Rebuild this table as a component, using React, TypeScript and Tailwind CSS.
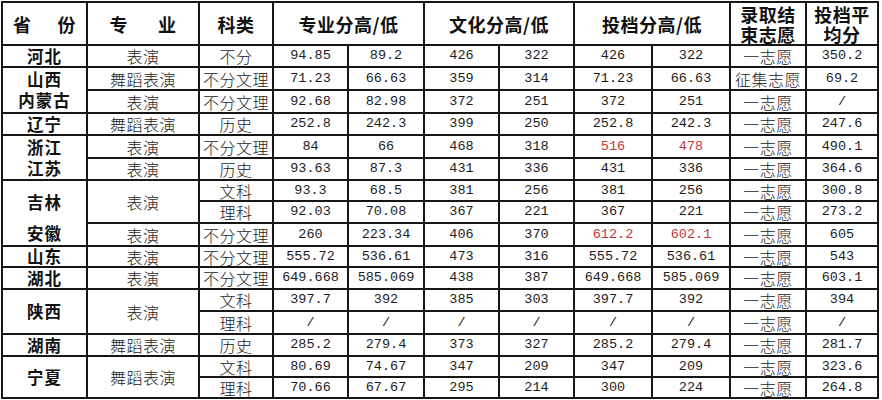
import React from 'react';

const CJK = { fontFamily: '"Noto Sans CJK SC", "Noto Sans", sans-serif' };

function H({ children, colSpan }: { children: React.ReactNode; colSpan?: number }) {
  return (
    <th
      colSpan={colSpan}
      className="border-2 border-[#161616] p-0 text-center align-middle text-[18px] font-bold leading-[20px] text-[#111] tracking-[0.5px]"
    >
      {children}
    </th>
  );
}

function T({ children, rowSpan }: { children: React.ReactNode; rowSpan?: number }) {
  return (
    <td
      rowSpan={rowSpan}
      className="border-2 border-[#161616] p-0 text-center align-middle text-[16px] font-light leading-none text-[#222] tracking-[0.5px]"
    >
      {children}
    </td>
  );
}

function P({ children, rowSpan }: { children: React.ReactNode; rowSpan?: number }) {
  return (
    <td
      rowSpan={rowSpan}
      className="border-2 border-[#161616] p-0 text-center align-middle text-[16.5px] font-bold leading-none text-[#111] tracking-[1px]"
    >
      {children}
    </td>
  );
}

function N({ children, red }: { children: React.ReactNode; red?: boolean }) {
  return (
    <td
      className={
        red
          ? 'border-2 border-[#161616] p-0 text-center align-middle font-["Liberation_Mono",monospace] text-[13.5px] leading-none text-[#c0393b]'
          : 'border-2 border-[#161616] p-0 text-center align-middle font-["Liberation_Mono",monospace] text-[13.5px] leading-none text-[#1c1c1c]'
      }
    >
      {children}
    </td>
  );
}

function Nums({ v, red }: { v: string[]; red?: boolean }) {
  return (
    <>
      <N>{v[0]}</N>
      <N>{v[1]}</N>
      <N>{v[2]}</N>
      <N>{v[3]}</N>
      <N red={red}>{v[4]}</N>
      <N red={red}>{v[5]}</N>
    </>
  );
}

export default function App() {
  return (
    <div className="w-[882px] h-[400px] bg-white pt-[1px] pl-[1px]" style={CJK}>
      <table className="w-[876px] table-fixed border-collapse border-2 border-[#161616]">
        <colgroup>
          <col className="w-[85px]" />
          <col className="w-[112px]" />
          <col className="w-[74px]" />
          <col className="w-[75px]" />
          <col className="w-[76px]" />
          <col className="w-[75px]" />
          <col className="w-[75px]" />
          <col className="w-[78px]" />
          <col className="w-[78px]" />
          <col className="w-[76px]" />
          <col className="w-[72px]" />
        </colgroup>
        <thead>
          <tr className="h-[43px]">
            <H>
              <div className="flex justify-center gap-[26px]">
                <span>省</span>
                <span>份</span>
              </div>
            </H>
            <H>
              <div className="flex justify-center gap-[30px]">
                <span>专</span>
                <span>业</span>
              </div>
            </H>
            <H>科类</H>
            <H colSpan={2}>专业分高/低</H>
            <H colSpan={2}>文化分高/低</H>
            <H colSpan={2}>投档分高/低</H>
            <H>
              <div>录取结</div>
              <div>束志愿</div>
            </H>
            <H>
              <div>投档平</div>
              <div>均分</div>
            </H>
          </tr>
        </thead>
        <tbody>
          <tr className="h-[22px]">
            <P>河北</P>
            <T>表演</T>
            <T>不分</T>
            <Nums v={['94.85', '89.2', '426', '322', '426', '322']} />
            <T>一志愿</T>
            <N>350.2</N>
          </tr>
          <tr className="h-[23px]">
            <P rowSpan={2}>
              <div className="leading-[21px]">山西</div>
              <div className="leading-[21px]">内蒙古</div>
            </P>
            <T>舞蹈表演</T>
            <T>不分文理</T>
            <Nums v={['71.23', '66.63', '359', '314', '71.23', '66.63']} />
            <T>征集志愿</T>
            <N>69.2</N>
          </tr>
          <tr className="h-[23px]">
            <T>表演</T>
            <T>不分文理</T>
            <Nums v={['92.68', '82.98', '372', '251', '372', '251']} />
            <T>一志愿</T>
            <N>/</N>
          </tr>
          <tr className="h-[22px]">
            <P>辽宁</P>
            <T>舞蹈表演</T>
            <T>历史</T>
            <Nums v={['252.8', '242.3', '399', '250', '252.8', '242.3']} />
            <T>一志愿</T>
            <N>247.6</N>
          </tr>
          <tr className="h-[23px]">
            <P rowSpan={2}>
              <div className="leading-[21px]">浙江</div>
              <div className="leading-[21px]">江苏</div>
            </P>
            <T>表演</T>
            <T>不分文理</T>
            <Nums v={['84', '66', '468', '318', '516', '478']} red />
            <T>一志愿</T>
            <N>490.1</N>
          </tr>
          <tr className="h-[22px]">
            <T>表演</T>
            <T>历史</T>
            <Nums v={['93.63', '87.3', '431', '336', '431', '336']} />
            <T>一志愿</T>
            <N>364.6</N>
          </tr>
          <tr className="h-[21px]">
            <P rowSpan={3}>
              <div className="flex h-[40px] items-center justify-center">吉林</div>
              <div className="flex h-[22px] items-center justify-center">安徽</div>
            </P>
            <T rowSpan={2}>表演</T>
            <T>文科</T>
            <Nums v={['93.3', '68.5', '381', '256', '381', '256']} />
            <T>一志愿</T>
            <N>300.8</N>
          </tr>
          <tr className="h-[22px]">
            <T>理科</T>
            <Nums v={['92.03', '70.08', '367', '221', '367', '221']} />
            <T>一志愿</T>
            <N>273.2</N>
          </tr>
          <tr className="h-[23px]">
            <T>表演</T>
            <T>不分文理</T>
            <Nums v={['260', '223.34', '406', '370', '612.2', '602.1']} red />
            <T>一志愿</T>
            <N>605</N>
          </tr>
          <tr className="h-[21px]">
            <P>山东</P>
            <T>表演</T>
            <T>不分文理</T>
            <Nums v={['555.72', '536.61', '473', '316', '555.72', '536.61']} />
            <T>一志愿</T>
            <N>543</N>
          </tr>
          <tr className="h-[22px]">
            <P>湖北</P>
            <T>表演</T>
            <T>不分文理</T>
            <Nums v={['649.668', '585.069', '438', '387', '649.668', '585.069']} />
            <T>一志愿</T>
            <N>603.1</N>
          </tr>
          <tr className="h-[22px]">
            <P rowSpan={2}>陕西</P>
            <T rowSpan={2}>表演</T>
            <T>文科</T>
            <Nums v={['397.7', '392', '385', '303', '397.7', '392']} />
            <T>一志愿</T>
            <N>394</N>
          </tr>
          <tr className="h-[23px]">
            <T>理科</T>
            <Nums v={['/', '/', '/', '/', '/', '/']} />
            <T>一志愿</T>
            <N>/</N>
          </tr>
          <tr className="h-[22px]">
            <P>湖南</P>
            <T>舞蹈表演</T>
            <T>历史</T>
            <Nums v={['285.2', '279.4', '373', '327', '285.2', '279.4']} />
            <T>一志愿</T>
            <N>281.7</N>
          </tr>
          <tr className="h-[21px]">
            <P rowSpan={2}>宁夏</P>
            <T rowSpan={2}>舞蹈表演</T>
            <T>文科</T>
            <Nums v={['80.69', '74.67', '347', '209', '347', '209']} />
            <T>一志愿</T>
            <N>323.6</N>
          </tr>
          <tr className="h-[21px]">
            <T>理科</T>
            <Nums v={['70.66', '67.67', '295', '214', '300', '224']} />
            <T>一志愿</T>
            <N>264.8</N>
          </tr>
        </tbody>
      </table>
    </div>
  );
}
